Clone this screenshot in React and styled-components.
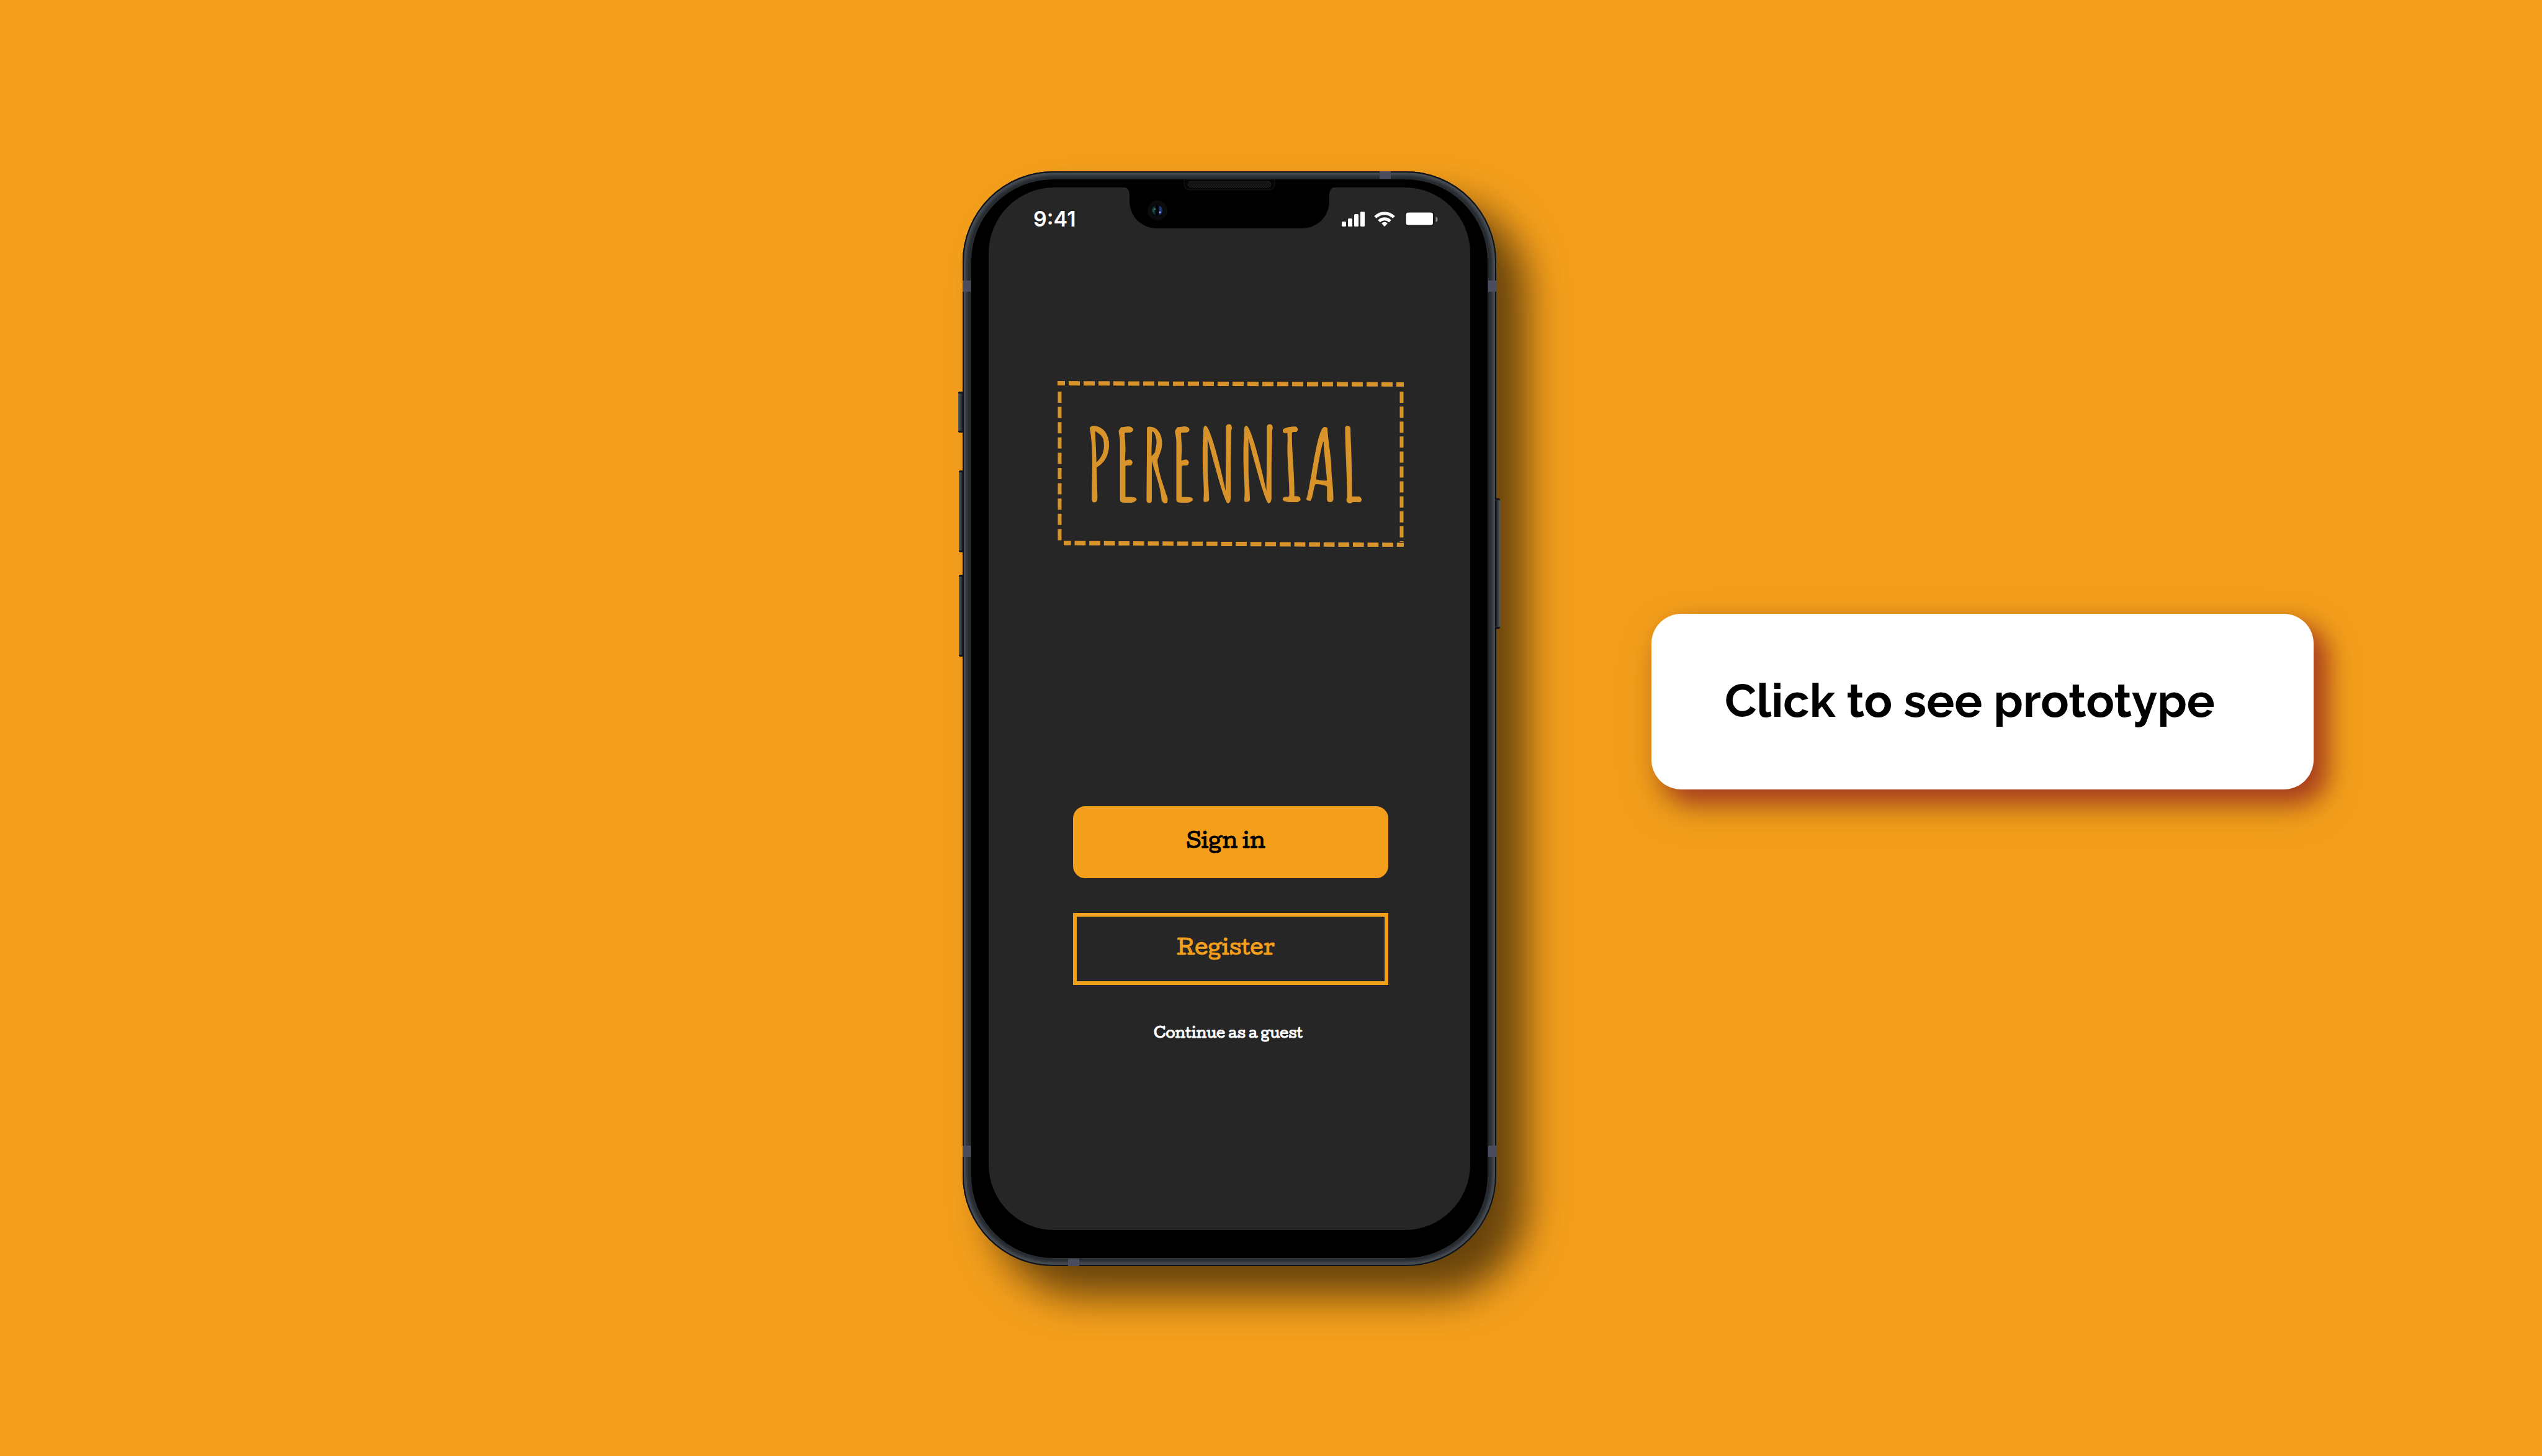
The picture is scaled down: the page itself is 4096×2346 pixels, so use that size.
import React from "react";
import styled, { createGlobalStyle } from "styled-components";

const color = {
  amber: "#f49f1c",
  logo: "#d9932b",
  screen: "#262626",
  band: "#4b4d5e",
};

const typewriter = `"American Typewriter", "Cutive", "DejaVu Serif", serif`;

const GlobalStyle = createGlobalStyle`
  *, *::before, *::after { box-sizing: border-box; }
  body { margin: 0; background: ${color.amber}; }
`;

const Page = styled.main`
  display: grid;
  grid-template-columns: 1551fr 860px 1685fr;
  align-items: center;
  min-height: 100vh;
  padding: 275px 0 306px;
  background: ${color.amber};
`;

const Phone = styled.section`
  position: relative;
  grid-column: 2;
  display: flex;
  min-height: 1764px;
  padding: 13px 14px;
  border-radius: 146px;
  background: #23282e;
  box-shadow:
    inset 0 0 0 2px #0e1216,
    inset 0 0 4px 6px #4a4f55,
    inset 0 0 4px 11px #2a3036,
    48px 48px 64px rgba(0, 0, 0, 0.58);
`;

const Bezel = styled.div`
  position: relative;
  display: flex;
  flex: 1;
  padding: 13px 28px 45px;
  border-radius: 132px;
  background: #000;
  box-shadow: 0 0 0 1px #30302f;
`;

const Screen = styled.div`
  display: flex;
  flex: 1;
  flex-direction: column;
  align-items: center;
  padding-left: 4px;
  border-radius: 106px;
  background: ${color.screen};
`;

const SideKey = styled.span`
  position: absolute;
  top: ${(p) => p.$top}px;
  ${(p) => (p.$right ? "left: 100%;" : "right: 100%;")}
  width: ${(p) => p.$width}px;
  height: ${(p) => p.$height}px;
  border-block: 3px solid #12161a;
  border-radius: ${(p) => (p.$right ? "0 2px 2px 0" : "2px 0 0 2px")};
  background: linear-gradient(
    ${(p) => (p.$right ? "90deg" : "270deg")},
    #1b2026,
    #40454c 60%,
    #565b62
  );
`;

const SideBand = styled.span`
  position: absolute;
  top: ${(p) => p.$top}px;
  ${(p) => (p.$right ? "right: 0;" : "left: 0;")}
  width: 13px;
  height: 18px;
  background: ${color.band};
`;

const EndBand = styled.span`
  position: absolute;
  left: ${(p) => p.$left}px;
  ${(p) => (p.$bottom ? "bottom: 0;" : "top: 0;")}
  width: 18px;
  height: 13px;
  background: ${color.band};
`;

const Notch = styled.svg`
  position: absolute;
  top: 0;
  left: 50%;
  width: 340px;
  height: 79px;
  margin-left: -170px;
`;

const StatusBar = styled.header`
  display: flex;
  align-items: center;
  justify-content: space-between;
  width: 100%;
  height: 102px;
  padding: 0 52px 0 68px;
`;

const Clock = styled.time`
  color: #fff;
  font: 600 34px/40px Inter, sans-serif;
`;

const StatusIcons = styled.svg`
  width: 156px;
  height: 24px;
`;

const Logo = styled.h1`
  position: relative;
  display: flex;
  align-items: center;
  justify-content: center;
  width: 558px;
  height: 268px;
  margin: 209px 0 0;
  padding-right: 20px;
  color: ${color.logo};
  font: 700 160px/200px "Amatic SC", "Liberation Sans Narrow", "DejaVu Sans Condensed", sans-serif;
`;

const Stitches = styled.svg`
  position: absolute;
  inset: 0;
  width: 100%;
  height: 100%;
`;

const Actions = styled.div`
  display: flex;
  flex-direction: column;
  align-items: center;
  gap: 56px;
  width: 508px;
  margin-top: 418px;
`;

const ActionButton = styled.button`
  width: 100%;
  height: 116px;
  padding: 0 16px 8px 0;
  border: 6px solid ${color.amber};
  border-radius: ${(p) => (p.$filled ? 20 : 0)}px;
  background: ${(p) => (p.$filled ? color.amber : "transparent")};
  color: ${(p) => (p.$filled ? "#000" : color.amber)};
  font: 400 33px/48px ${typewriter};
  -webkit-text-stroke: 1px currentColor;
  cursor: pointer;
`;

const GuestLink = styled.a`
  padding-right: 8px;
  color: #fff;
  font: 400 22px/40px ${typewriter};
  -webkit-text-stroke: 1px currentColor;
  text-decoration: none;
`;

const Aside = styled.aside`
  grid-column: 3;
  padding: 0 368px 54px 250px;
`;

const PrototypeLink = styled.a`
  display: flex;
  align-items: center;
  min-height: 283px;
  padding: 0 118px 4px;
  border-radius: 48px;
  background: #fff;
  box-shadow:
    20px 20px 40px #a8391f,
    12px 28px 64px rgba(120, 100, 20, 0.35);
  color: #000;
  font: 700 75px/96px Raleway, Lato, sans-serif;
  text-decoration: none;
  white-space: nowrap;
`;

function NotchArt() {
  return (
    <Notch viewBox="0 0 340 79" aria-hidden="true">
      <defs>
        <pattern id="mesh" width="4" height="4" patternUnits="userSpaceOnUse">
          <rect width="4" height="4" fill="#0c0c0c" />
          <circle cx="1" cy="1" r="1" fill="#222" />
          <circle cx="3" cy="3" r="1" fill="#222" />
        </pattern>
        <linearGradient id="lens">
          <stop offset="0" stopColor="#1f6f68" />
          <stop offset="0.35" stopColor="#02080a" />
          <stop offset="0.55" stopColor="#03040c" />
          <stop offset="0.8" stopColor="#1c3f9a" />
          <stop offset="1" stopColor="#1a2450" />
        </linearGradient>
      </defs>
      <path
        d="M0 0H340V13C333 13 331 18 331 28V34C331 60 312 79 286 79H54C28 79 9 60 9 34V28C9 18 7 13 0 13Z"
        fill="#000"
      />
      <path d="M97 0V7Q97 17 107 17H233Q243 17 243 7V0" fill="#050505" stroke="#1a1a1a" strokeWidth="1" />
      <rect x="103" y="3" width="134" height="10" rx="5" fill="url(#mesh)" stroke="#1d1d1d" strokeWidth="1" />
      <circle cx="54" cy="50" r="16" fill="#0a0b0c" />
      <circle cx="54" cy="50" r="8" fill="url(#lens)" />
      <rect x="52" y="42" width="4" height="16" fill="#02030a" />
      <circle cx="58" cy="53" r="1.5" fill="#b9a6e0" />
      <circle cx="50" cy="48" r="1.2" fill="#3f9c95" />
    </Notch>
  );
}

function StatusArt() {
  return (
    <StatusIcons viewBox="0 0 156 24" role="img" aria-label="Signal, Wi-Fi and battery full">
      <g fill="#fff">
        <rect x="1" y="16" width="7" height="8" rx="1.5" />
        <rect x="11" y="11" width="7" height="13" rx="1.5" />
        <rect x="21" y="4" width="7" height="20" rx="1.5" />
        <rect x="31" y="0" width="7" height="24" rx="1.5" />
      </g>
      <g fill="none" stroke="#fff" strokeWidth="5">
        <path d="M55 9C63.500 0.500 76.500 0.500 85 9" />
        <path d="M61 15.500C66 10.500 74 10.500 79 15.500" />
      </g>
      <path d="M65 18.500Q70 15 75 18.500L70.700 23.500Q70 24.200 69.300 23.500Z" fill="#fff" />
      <rect x="102.500" y="-0.500" width="48" height="24" rx="5" fill="#1b1b1b" />
      <rect x="104.500" y="1.500" width="43.500" height="20" rx="3.500" fill="#fff" />
      <path d="M152.500 8Q155.500 9 155.500 12.500T152.500 17Z" fill="#8a8a8a" />
    </StatusIcons>
  );
}

function LogoFrame() {
  return (
    <Stitches viewBox="0 0 558 268" preserveAspectRatio="none" aria-hidden="true">
      <g fill="none" stroke={color.logo}>
        <path d="M0 4.500L558 6.500" strokeWidth="7" strokeDasharray="18 6" strokeDashoffset="6" />
        <path d="M10 262L558 265" strokeWidth="7" strokeDasharray="17.700 5.900" strokeDashoffset="6" />
        <path d="M3.500 18V264" strokeWidth="6" strokeDasharray="18 6.600" />
        <path d="M554.500 18V260" strokeWidth="6" strokeDasharray="18 6.100" />
      </g>
    </Stitches>
  );
}

export default function App() {
  return (
    <>
      <GlobalStyle />
      <Page>
        <Phone>
          <SideKey $top={355} $width={7} $height={66} />
          <SideKey $top={482} $width={6} $height={132} />
          <SideKey $top={650} $width={6} $height={132} />
          <SideKey $top={527} $width={6} $height={210} $right />
          <SideBand $top={176} />
          <SideBand $top={176} $right />
          <SideBand $top={1570} />
          <SideBand $top={1570} $right />
          <EndBand $left={672} />
          <EndBand $left={170} $bottom />
          <Bezel>
            <Screen>
              <StatusBar>
                <Clock>9:41</Clock>
                <StatusArt />
              </StatusBar>
              <Logo>
                <LogoFrame />
                PERENNIAL
              </Logo>
              <Actions>
                <ActionButton type="button" $filled>Sign in</ActionButton>
                <ActionButton type="button">Register</ActionButton>
                <GuestLink href="#guest">Continue as a guest</GuestLink>
              </Actions>
            </Screen>
            <NotchArt />
          </Bezel>
        </Phone>
        <Aside>
          <PrototypeLink href="#prototype">Click to see prototype</PrototypeLink>
        </Aside>
      </Page>
    </>
  );
}
